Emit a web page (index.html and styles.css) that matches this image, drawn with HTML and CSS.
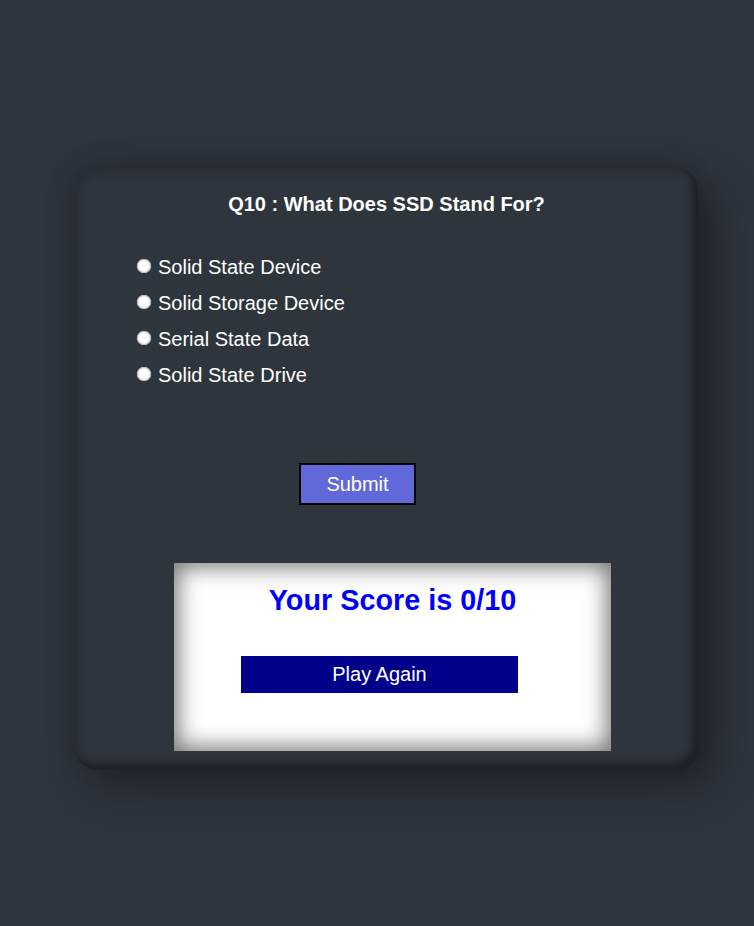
FILE: index.html
```html
<!DOCTYPE html>
<html lang="en">
<head>
<meta charset="utf-8">
<title>Quiz</title>
<link rel="stylesheet" href="styles.css">
</head>
<body>
<main class="page">
  <section class="card">
    <h2 class="question">Q10 : What Does SSD Stand For?</h2>
    <ul class="options">
      <li class="option"><input class="radio" type="radio" name="answer" id="a"><label for="a">Solid State Device</label></li>
      <li class="option"><input class="radio" type="radio" name="answer" id="b"><label for="b">Solid Storage Device</label></li>
      <li class="option"><input class="radio" type="radio" name="answer" id="c"><label for="c">Serial State Data</label></li>
      <li class="option"><input class="radio" type="radio" name="answer" id="d"><label for="d">Solid State Drive</label></li>
    </ul>
    <button class="submit" type="button">Submit</button>
    <div class="score">
      <h1 class="score-title">Your Score is 0/10</h1>
      <button class="again" type="button">Play Again</button>
    </div>
  </section>
</main>
</body>
</html>
```
FILE: styles.css
```css
html, body {
  margin: 0;
  padding: 0;
}
body {
  background: #2f353d;
  font-family: "Liberation Sans", Arial, sans-serif;
  color: #fff;
  min-height: 926px;
}
.page {
  padding: 168px 0 0 75px;
}
.card {
  box-sizing: border-box;
  width: 623px;
  height: 602px;
  border-radius: 22px;
  background: #2f353d;
  padding-top: 25px;
  box-shadow:
    16px 16px 44px rgba(0, 0, 0, 0.38),
    -6px -6px 24px rgba(0, 0, 0, 0.12),
    inset -6px -7px 10px rgba(0, 0, 0, 0.38),
    inset 5px 5px 10px rgba(0, 0, 0, 0.12);
}
.question {
  margin: 0;
  font-size: 20px;
  font-weight: bold;
  text-align: center;
  line-height: normal;
}
.options {
  list-style: none;
  margin: 33px 0 0 62px;
  padding: 0;
}
.option {
  display: flex;
  align-items: center;
  height: 36px;
  font-size: 20px;
}
.radio {
  appearance: none;
  -webkit-appearance: none;
  width: 14px;
  height: 14px;
  margin: 0 7px 3px 0;
  border-radius: 50%;
  background: #fff;
  box-shadow: inset 0 0 2px 0.5px #9a9a9a, 0 0 1px rgba(255,255,255,0.4);
  flex: none;
}
.submit {
  display: block;
  box-sizing: border-box;
  width: 117px;
  height: 42px;
  margin: 70px 0 0 224px;
  padding: 0;
  background: #6168d9;
  border: 2px solid #000;
  color: #fff;
  font-family: "Liberation Sans", Arial, sans-serif;
  font-size: 20px;
}
.score {
  box-sizing: border-box;
  width: 437px;
  height: 188px;
  margin: 58px 0 0 99px;
  padding-top: 21px;
  background: #fff;
  box-shadow: inset 0 0 22px 4px rgba(0, 0, 0, 0.55);
}
.score-title {
  margin: 0;
  color: #0000ff;
  font-size: 28.8px;
  font-weight: bold;
  text-align: center;
  line-height: normal;
}
.again {
  display: block;
  box-sizing: border-box;
  width: 277px;
  height: 37px;
  margin: 39px 0 0 67px;
  padding: 0;
  border: none;
  background: #00008b;
  color: #fff;
  font-family: "Liberation Sans", Arial, sans-serif;
  font-size: 20px;
}
```
